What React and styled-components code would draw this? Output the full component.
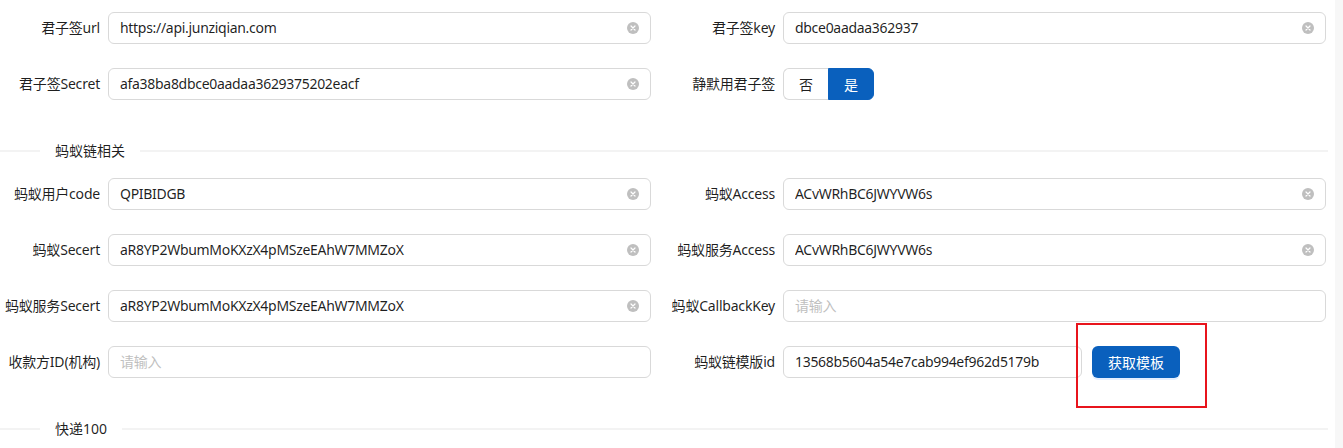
import React from "react";
import styled, { createGlobalStyle } from "styled-components";

const Global = createGlobalStyle`
  html, body { margin: 0; padding: 0; background: #f7f7f7; }
  body {
    font-family: "Segoe UI", "Noto Sans", "Noto Sans CJK SC", sans-serif;
    font-size: 14px;
    color: rgba(0, 0, 0, 0.88);
  }
`;

const Page = styled.div`
  width: 1335px;
  height: 448px;
  background: #fff;
  padding-top: 12px;
  box-sizing: border-box;
  overflow: hidden;
`;

const Grid = styled.div`
  width: 1326px;
  display: grid;
  grid-template-columns: 651px 651px;
  column-gap: 24px;
  row-gap: 24px;
`;

const Item = styled.div`
  position: relative;
  display: flex;
  align-items: center;
  height: 32px;
`;

const Label = styled.label`
  flex: 0 0 108px;
  width: 108px;
  min-width: 0;
  box-sizing: border-box;
  padding-right: 8px;
  display: flex;
  justify-content: flex-end;
  white-space: nowrap;
  font-size: 14px;
  line-height: 22px;
  letter-spacing: -0.2px;
  color: rgba(0, 0, 0, 0.88);
`;

const InputBox = styled.div`
  flex: ${(p) => (p.$width ? `0 0 ${p.$width}px` : "1 1 auto")};
  min-width: 0;
  box-sizing: border-box;
  height: 32px;
  border: 1px solid #d9d9d9;
  border-radius: 6px;
  padding: 0 11px;
  display: flex;
  align-items: center;
  background: #fff;
`;

const Value = styled.span`
  flex: 1;
  font-size: 14px;
  line-height: 22px;
  letter-spacing: -0.3px;
  color: ${(p) => (p.$placeholder ? "#bfbfbf" : "rgba(0,0,0,0.88)")};
  white-space: nowrap;
  overflow: hidden;
`;

const Radio = styled.div`
  display: flex;
  height: 32px;
`;

const RadioBtn = styled.div`
  box-sizing: border-box;
  height: 32px;
  width: ${(p) => (p.$first ? "45px" : "46px")};
  display: flex;
  align-items: center;
  justify-content: center;
  font-size: 14px;
  border: 1px solid ${(p) => (p.$active ? "#0a60bd" : "#d9d9d9")};
  background: ${(p) => (p.$active ? "#0a60bd" : "#fff")};
  color: ${(p) => (p.$active ? "#fff" : "rgba(0,0,0,0.88)")};
  border-radius: ${(p) => (p.$first ? "6px 0 0 6px" : "0 6px 6px 0")};
  ${(p) => (p.$first ? "border-right: none;" : "")}
`;

const Button = styled.button`
  margin-left: 10px;
  height: 32px;
  width: 88px;
  border: none;
  border-radius: 6px;
  background: #0a60bd;
  color: #fff;
  font-family: inherit;
  font-size: 14px;
  box-shadow: 0 2px 0 rgba(5, 95, 255, 0.1);
`;

const Mark = styled.div`
  position: absolute;
  left: 401px;
  top: -23px;
  width: 131px;
  height: 85px;
  box-sizing: border-box;
  border: 2px solid #e8141c;
  pointer-events: none;
`;

const Divider = styled.div`
  width: 1328px;
  display: flex;
  align-items: center;
  margin: ${(p) => (p.$last ? "40px 0 0" : "40px 0 16px")};
  height: 22px;
  &::before {
    content: "";
    flex: 0 0 40px;
    border-top: 2px solid #f3f3f3;
  }
  &::after {
    content: "";
    flex: 1;
    border-top: 2px solid #f3f3f3;
  }
`;

const DividerText = styled.span`
  padding: 0 15px;
  font-size: 14px;
  line-height: 22px;
  color: rgba(0, 0, 0, 0.88);
`;

const ClearIcon = () => (
  <svg width="12" height="12" viewBox="0 0 12 12">
    <circle cx="6" cy="6" r="6" fill="#bfbfbf" />
    <path d="M4 4 L8 8 M8 4 L4 8" stroke="#fff" strokeWidth="1.2" strokeLinecap="round" />
  </svg>
);

const Field = ({ label, value, placeholder, clear = true }) => (
  <Item>
    <Label>{label}</Label>
    <InputBox>
      <Value $placeholder={!value}>{value || placeholder}</Value>
      {value && clear ? <ClearIcon /> : null}
    </InputBox>
  </Item>
);

export default function App() {
  return (
    <>
      <Global />
      <Page>
        <Grid>
          <Field label="君子签url" value="https://api.junziqian.com" />
          <Field label="君子签key" value="dbce0aadaa362937" />
          <Field label="君子签Secret" value="afa38ba8dbce0aadaa3629375202eacf" />
          <Item>
            <Label>静默用君子签</Label>
            <Radio>
              <RadioBtn $first>否</RadioBtn>
              <RadioBtn $active>是</RadioBtn>
            </Radio>
          </Item>
        </Grid>
        <Divider>
          <DividerText>蚂蚁链相关</DividerText>
        </Divider>
        <Grid>
          <Field label="蚂蚁用户code" value="QPIBIDGB" />
          <Field label="蚂蚁Access" value="ACvWRhBC6JWYVW6s" />
          <Field label="蚂蚁Secert" value="aR8YP2WbumMoKXzX4pMSzeEAhW7MMZoX" />
          <Field label="蚂蚁服务Access" value="ACvWRhBC6JWYVW6s" />
          <Field label="蚂蚁服务Secert" value="aR8YP2WbumMoKXzX4pMSzeEAhW7MMZoX" />
          <Field label="蚂蚁CallbackKey" placeholder="请输入" />
          <Field label="收款方ID(机构)" placeholder="请输入" />
          <Item>
            <Label>蚂蚁链模版id</Label>
            <InputBox $width={299}>
              <Value>13568b5604a54e7cab994ef962d5179b</Value>
            </InputBox>
            <Button>获取模板</Button>
            <Mark />
          </Item>
        </Grid>
        <Divider $last>
          <DividerText>快递100</DividerText>
        </Divider>
      </Page>
    </>
  );
}
